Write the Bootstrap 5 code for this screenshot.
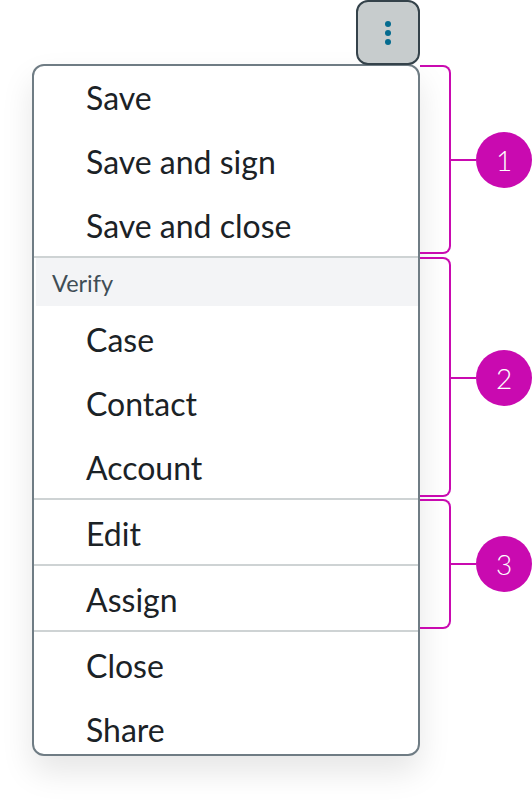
<!DOCTYPE html>
<html lang="en">
<head>
<meta charset="utf-8">
<title>Menu anatomy</title>
<link href="https://cdn.jsdelivr.net/npm/bootstrap@5.3.0/dist/css/bootstrap.min.css" rel="stylesheet">
<style>
html, body { height: 100%; background: #fff; overflow: hidden; }
body { font-family: Lato, "Liberation Sans", sans-serif; color: #1b2226; }
.stage { position: relative; width: 532px; height: 812px; padding-left: 32px; }
.kebab { width: 64px; height: 65px; margin-left: 324px; margin-bottom: -1px; padding: 0; background: #c7cccd; border: 2px solid #34424a; border-radius: 12px; position: relative; z-index: 1; }
.kebab:hover { background: #c7cccd; border-color: #34424a; }
.menu-box { position: relative; width: 388px; height: 692px; background: #fff; border: 2px solid #6f7c84; border-radius: 12px; overflow: hidden; box-shadow: 0 16px 32px rgba(0, 0, 0, .1); }
.menu-item { height: 64px; padding-left: 52px; font-size: 32px; line-height: 64px; color: #1b2226; }
.menu-group { border-bottom: 2px solid #ced3d4; }
.menu-group > .menu-item:last-child { height: 62px; }
.menu-group.spaced, .menu-tail { padding-top: 2px; }
.menu-heading { height: 48px; margin-left: 2px; margin-bottom: 2px; padding-left: 16px; background: #f3f4f6; font-size: 23.5px; line-height: 50px; color: #3f4d55; }
.bracket { position: absolute; left: 420px; width: 31px; border: 2px solid #c90ab0; border-left: 0; border-radius: 0 8px 8px 0; }
.bracket-stem { position: absolute; left: 100%; top: 50%; width: 27px; height: 2px; margin-top: -1px; background: #c90ab0; }
.callout { position: absolute; left: 476px; width: 56px; height: 56px; border-radius: 50%; background: #c90ab0; color: #fff; font-size: 28px; font-weight: 300; }
.b-one { top: 65px; height: 189px; }
.b-two { top: 257px; height: 240px; }
.b-two .bracket-stem { margin-top: 0; }
.b-three { top: 499px; height: 130px; }
.c-one { top: 132px; }
.c-two { top: 350px; }
.c-three { top: 536px; }
</style>
</head>
<body>
<div class="stage">
  <button type="button" class="btn kebab d-flex align-items-center justify-content-center" aria-label="More">
    <svg width="8" height="28" viewBox="0 0 8 28" aria-hidden="true"><g fill="#046b8f"><circle cx="4" cy="5" r="3"/><circle cx="4" cy="14" r="3"/><circle cx="4" cy="23" r="3"/></g></svg>
  </button>
  <div class="menu-box">
    <div class="menu-group">
      <div class="menu-item">Save</div>
      <div class="menu-item">Save and sign</div>
      <div class="menu-item">Save and close</div>
    </div>
    <div class="menu-group">
      <div class="menu-heading">Verify</div>
      <div class="menu-item">Case</div>
      <div class="menu-item">Contact</div>
      <div class="menu-item">Account</div>
    </div>
    <div class="menu-group spaced"><div class="menu-item">Edit</div></div>
    <div class="menu-group spaced"><div class="menu-item">Assign</div></div>
    <div class="menu-tail">
      <div class="menu-item">Close</div>
      <div class="menu-item">Share</div>
    </div>
  </div>
  <div class="bracket b-one"><span class="bracket-stem"></span></div>
  <div class="bracket b-two"><span class="bracket-stem"></span></div>
  <div class="bracket b-three"><span class="bracket-stem"></span></div>
  <div class="callout c-one d-flex align-items-center justify-content-center">1</div>
  <div class="callout c-two d-flex align-items-center justify-content-center">2</div>
  <div class="callout c-three d-flex align-items-center justify-content-center">3</div>
</div>
<script src="https://cdn.jsdelivr.net/npm/bootstrap@5.3.0/dist/js/bootstrap.bundle.min.js"></script>
</body>
</html>
